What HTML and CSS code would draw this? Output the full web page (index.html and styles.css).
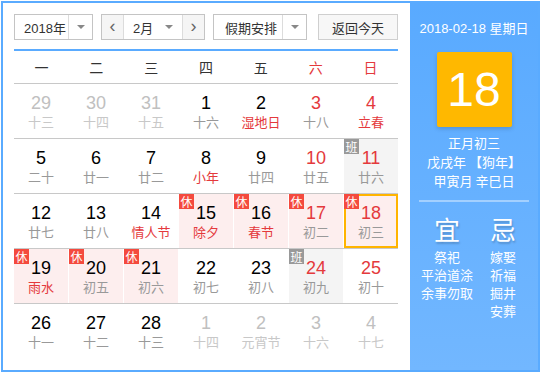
FILE: index.html
```html
<!DOCTYPE html>
<html lang="zh-CN">
<head>
    <meta charset="UTF-8">
    <title>万年历</title>
    <link rel="stylesheet" href="styles.css">
</head>
<body>
    <div class="calendar">
        <div class="main">
            <div class="toolbar">
                <div class="select year">
                    <span class="select-text">2018年</span>
                    <span class="select-arrow"><i class="caret"></i></span>
                </div>
                <div class="month-group">
                    <span class="nav-btn">&lsaquo;</span>
                    <div class="month">
                        <span class="select-text">2月</span>
                        <i class="caret"></i>
                    </div>
                    <span class="nav-btn">&rsaquo;</span>
                </div>
                <div class="select holiday">
                    <span class="select-text">假期安排</span>
                    <span class="select-arrow"><i class="caret"></i></span>
                </div>
                <button type="button" class="today-btn">返回今天</button>
            </div>

            <div class="week-head">
                <span>一</span><span>二</span><span>三</span><span>四</span><span>五</span>
                <span class="weekend">六</span><span class="weekend">日</span>
            </div>

            <div class="week">
                <div class="day other"><b>29</b><em>十三</em></div>
                <div class="day other"><b>30</b><em>十四</em></div>
                <div class="day other"><b>31</b><em>十五</em></div>
                <div class="day"><b>1</b><em>十六</em></div>
                <div class="day"><b>2</b><em class="fest">湿地日</em></div>
                <div class="day red"><b>3</b><em>十八</em></div>
                <div class="day red"><b>4</b><em class="fest">立春</em></div>
            </div>
            <div class="week">
                <div class="day"><b>5</b><em>二十</em></div>
                <div class="day"><b>6</b><em>廿一</em></div>
                <div class="day"><b>7</b><em>廿二</em></div>
                <div class="day"><b>8</b><em class="fest">小年</em></div>
                <div class="day"><b>9</b><em>廿四</em></div>
                <div class="day red"><b>10</b><em>廿五</em></div>
                <div class="day red work"><span class="badge">班</span><b>11</b><em>廿六</em></div>
            </div>
            <div class="week">
                <div class="day"><b>12</b><em>廿七</em></div>
                <div class="day"><b>13</b><em>廿八</em></div>
                <div class="day"><b>14</b><em class="fest">情人节</em></div>
                <div class="day rest"><span class="badge">休</span><b>15</b><em class="fest">除夕</em></div>
                <div class="day rest"><span class="badge">休</span><b>16</b><em class="fest">春节</em></div>
                <div class="day rest red"><span class="badge">休</span><b>17</b><em>初二</em></div>
                <div class="day rest red selected"><span class="badge">休</span><b>18</b><em>初三</em></div>
            </div>
            <div class="week">
                <div class="day rest"><span class="badge">休</span><b>19</b><em class="fest">雨水</em></div>
                <div class="day rest"><span class="badge">休</span><b>20</b><em>初五</em></div>
                <div class="day rest"><span class="badge">休</span><b>21</b><em>初六</em></div>
                <div class="day"><b>22</b><em>初七</em></div>
                <div class="day"><b>23</b><em>初八</em></div>
                <div class="day red work"><span class="badge">班</span><b>24</b><em>初九</em></div>
                <div class="day red"><b>25</b><em>初十</em></div>
            </div>
            <div class="week last">
                <div class="day"><b>26</b><em>十一</em></div>
                <div class="day"><b>27</b><em>十二</em></div>
                <div class="day"><b>28</b><em>十三</em></div>
                <div class="day other"><b>1</b><em>十四</em></div>
                <div class="day other"><b>2</b><em>元宵节</em></div>
                <div class="day other"><b>3</b><em>十六</em></div>
                <div class="day other"><b>4</b><em>十七</em></div>
            </div>
        </div>

        <div class="side">
            <p class="side-date">2018-02-18 星期日</p>
            <div class="big-day">18</div>
            <p class="lunar">正月初三</p>
            <p class="lunar">戊戌年 【狗年】</p>
            <p class="lunar">甲寅月 辛巳日</p>
            <div class="divider"></div>
            <div class="yiji">
                <div class="col">
                    <h2>宜</h2>
                    <p>祭祀</p>
                    <p>平治道涂</p>
                    <p>余事勿取</p>
                </div>
                <div class="col">
                    <h2>忌</h2>
                    <p>嫁娶</p>
                    <p>祈福</p>
                    <p>掘井</p>
                    <p>安葬</p>
                </div>
            </div>
        </div>
    </div>
</body>
</html>
```

FILE: styles.css
```css
body {
    margin: 0;
    background-color: #ffffff;
    font-family: "Liberation Sans", "Noto Sans CJK SC", sans-serif;
}
p {
    margin: 0;
}
.calendar {
    display: flex;
    box-sizing: border-box;
    width: 539px;
    height: 371px;
    margin: 1px;
    border: 2px solid #5aabff;
    background-color: #ffffff;
}

/* left side */
.main {
    width: 384px;
    padding: 11px 12px 0 11px;
}
.toolbar {
    display: flex;
    align-items: center;
    height: 26px;
    font-size: 13px;
    color: #333;
}
.select {
    display: flex;
    box-sizing: border-box;
    height: 26px;
    border: 1px solid #c4c4c4;
    background-color: #fff;
}
.select-text {
    display: flex;
    align-items: center;
    padding-left: 9px;
    flex: 1;
}
.select-arrow {
    display: flex;
    align-items: center;
    justify-content: center;
    width: 23px;
    border-left: 1px solid #dcdcdc;
}
.caret {
    width: 0;
    height: 0;
    border-left: 4px solid transparent;
    border-right: 4px solid transparent;
    border-top: 4px solid #888;
}
.year {
    width: 79px;
}
.month-group {
    display: flex;
    box-sizing: border-box;
    width: 104px;
    height: 26px;
    margin-left: 8px;
    border: 1px solid #c4c4c4;
}
.nav-btn {
    display: flex;
    align-items: center;
    justify-content: center;
    width: 21px;
    background-color: #f5f5f5;
    color: #666;
    font-size: 18px;
    line-height: 1;
    padding-bottom: 2px;
    box-sizing: border-box;
}
.month {
    display: flex;
    align-items: center;
    flex: 1;
    padding-right: 9px;
    border-left: 1px solid #dcdcdc;
    border-right: 1px solid #dcdcdc;
}
.holiday {
    width: 94px;
    margin-left: 8px;
}
.holiday .select-text {
    padding-left: 11px;
}
.today-btn {
    box-sizing: border-box;
    width: 80px;
    height: 26px;
    margin-left: 11px;
    padding: 0;
    border: 1px solid #cfcfcf;
    background-color: #f7f7f7;
    color: #333;
    font-family: "Noto Sans CJK SC", sans-serif;
    font-size: 13px;
}

.week-head {
    display: grid;
    grid-template-columns: repeat(7, 1fr);
    margin-top: 9px;
    height: 32px;
    border-top: 2px solid #5aabff;
    border-bottom: 1px solid #c8c8c8;
    font-family: "Noto Sans CJK SC", sans-serif;
    font-size: 14px;
    line-height: 32px;
    text-align: center;
    color: #333;
}
.week-head .weekend {
    color: #e4393c;
}

.week {
    display: grid;
    grid-template-columns: repeat(7, 54px);
    column-gap: 1px;
    height: 54px;
    border-bottom: 1px solid #c8c8c8;
}
.week.last {
    border-bottom: none;
}
.day {
    position: relative;
    display: flex;
    flex-direction: column;
    align-items: center;
    box-sizing: border-box;
    padding-top: 9px;
}
.day b {
    font-weight: normal;
    font-size: 18px;
    line-height: 20px;
    color: #000;
}
.day em {
    font-style: normal;
    font-family: "Noto Sans CJK SC", sans-serif;
    font-size: 13px;
    line-height: 18px;
    color: #999;
}
.day.red b {
    color: #e4393c;
}
.day em.fest {
    color: #e4393c;
}
.day.other b {
    color: #c0c0c0;
}
.day.other em {
    color: #c8c8c8;
}
.day.rest {
    background-color: #fdeeee;
}
.day.work {
    background-color: #f4f4f4;
}
.day.selected {
    box-shadow: inset 0 0 0 2px #ffb400;
}
.badge {
    position: absolute;
    top: 0;
    left: 0;
    width: 15px;
    height: 15px;
    background-color: #f44a3e;
    color: #fff;
    font-family: "Noto Sans CJK SC", sans-serif;
    font-size: 12px;
    line-height: 15px;
    text-align: center;
}
.work .badge {
    background-color: #999;
}

/* right side */
.side {
    flex: 1;
    display: flex;
    flex-direction: column;
    align-items: center;
    background: linear-gradient(#59aaff, #72b7ff);
    color: #fff;
    font-family: "Noto Sans CJK SC", sans-serif;
    font-size: 13px;
}
.side-date {
    margin-top: 17px;
    line-height: 18px;
    font-family: "Liberation Sans", "Noto Sans CJK SC", sans-serif;
}
.big-day {
    width: 75px;
    height: 75px;
    margin-top: 14px;
    border-radius: 2px;
    background-color: #ffb800;
    box-shadow: 0 2px 4px rgba(0, 0, 0, 0.15);
    font-family: "Liberation Sans", sans-serif;
    font-size: 48px;
    line-height: 75px;
    text-align: center;
}
.lunar {
    line-height: 19px;
}
.big-day + .lunar {
    margin-top: 6px;
}
.divider {
    width: 110px;
    height: 2px;
    margin-top: 10px;
    background-color: rgba(255, 255, 255, 0.4);
}
.yiji {
    display: grid;
    grid-template-columns: 56px 56px;
    align-self: flex-start;
    margin-left: 9px;
    margin-top: 12px;
}
.col {
    text-align: center;
}
.col h2 {
    margin: 0 0 4px;
    font-size: 26px;
    font-weight: normal;
    line-height: 30px;
    text-shadow: 1px 2px 2px rgba(0, 0, 0, 0.2);
}
.col p {
    line-height: 18px;
}
```
